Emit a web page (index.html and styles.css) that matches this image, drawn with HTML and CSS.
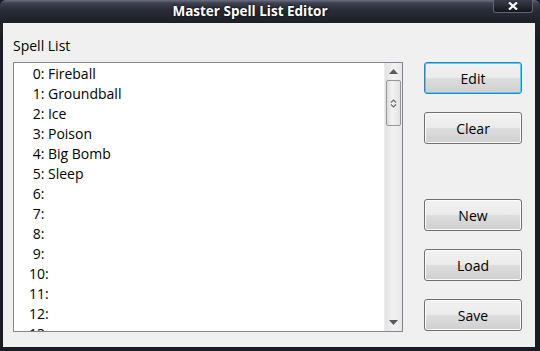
FILE: index.html
```html
<!DOCTYPE html>
<html lang="en">

<head>
  <meta charset="UTF-8" />
  <link rel="stylesheet" href="styles.css">
</head>

<body>
  <div class="window">
    <div class="titlebar">
      <span class="title">Master Spell List Editor</span>
      <div class="close">
        <svg width="10" height="8" viewBox="0 0 10 8"><path d="M1 0.5 L9 7.5 M9 0.5 L1 7.5" stroke="#ffffff" stroke-width="2.2"/></svg>
      </div>
    </div>
    <div class="client">
      <div class="list-side">
        <div class="label">Spell List</div>
        <div class="listbox">
          <div class="items">
            <div class="item"> 0: Fireball</div>
            <div class="item"> 1: Groundball</div>
            <div class="item"> 2: Ice</div>
            <div class="item"> 3: Poison</div>
            <div class="item"> 4: Big Bomb</div>
            <div class="item"> 5: Sleep</div>
            <div class="item"> 6:</div>
            <div class="item"> 7:</div>
            <div class="item"> 8:</div>
            <div class="item"> 9:</div>
            <div class="item">10:</div>
            <div class="item">11:</div>
            <div class="item">12:</div>
            <div class="item">13:</div>
          </div>
          <div class="scrollbar">
            <div class="arrow">
              <svg width="9" height="5" viewBox="0 0 9 5"><path d="M4.5 0 L9 5 L0 5 Z" fill="#5a5a5a"/></svg>
            </div>
            <div class="thumb">
              <svg width="7" height="9" viewBox="0 0 7 9"><path d="M1 3.5 L3.5 1 L6 3.5 M1 5.5 L3.5 8 L6 5.5" fill="none" stroke="#6a6a6a" stroke-width="1.2"/></svg>
            </div>
            <div class="track"></div>
            <div class="arrow">
              <svg width="9" height="5" viewBox="0 0 9 5"><path d="M0 0 L9 0 L4.5 5 Z" fill="#5a5a5a"/></svg>
            </div>
          </div>
        </div>
      </div>
      <div class="buttons">
        <button class="btn focus">Edit</button>
        <button class="btn">Clear</button>
        <div class="spacer"></div>
        <button class="btn">New</button>
        <button class="btn">Load</button>
        <button class="btn">Save</button>
      </div>
    </div>
  </div>
</body>

</html>
```

FILE: styles.css
```css
html,
body {
  margin: 0;
  height: 100%;
}

body {
  background-color: #1b1c23;
  font-family: "Open Sans", "Liberation Sans", sans-serif;
}

.window {
  display: flex;
  flex-direction: column;
  height: 351px;
  width: 540px;
  background: linear-gradient(#2a2c36, #1b1c23 40px);
  border-radius: 6px 6px 0 0;
  box-sizing: border-box;
}

.titlebar {
  height: 23px;
  position: relative;
  display: flex;
  justify-content: center;
  align-items: center;
  padding-right: 40px;
  background: linear-gradient(#6b7081 0, #3e4150 3px, #2a2c37 10px, #1e2029 22px);
  border-radius: 6px 6px 0 0;
}

.title {
  color: #ffffff;
  font-weight: bold;
  font-size: 13.5px;
  margin-top: -1px;
  text-shadow: 0 0 3px #000;
}

.close {
  position: absolute;
  top: 0;
  right: 7px;
  width: 38px;
  height: 12px;
  background: linear-gradient(#3a3d4a, #15161c);
  border: 1px solid #5f6372;
  border-top: none;
  border-radius: 0 0 3px 3px;
  display: flex;
  align-items: center;
  justify-content: center;
}

.client {
  flex: 1;
  margin: 0 5px 4px 3px;
  background-color: #f0f0f0;
  display: flex;
  padding: 14px 0 0 10px;
}

.label {
  color: #000000;
  font-size: 14px;
  line-height: 18px;
  height: 25px;
}

.listbox {
  width: 388px;
  height: 268px;
  border: 1px solid #828790;
  background-color: #ffffff;
  display: flex;
  overflow: hidden;
}

.items {
  flex: 1;
  padding: 1px 0 0 15px;
  overflow: hidden;
}

.item {
  white-space: pre;
  font-size: 14px;
  line-height: 20px;
  height: 20px;
  color: #000000;
}

.scrollbar {
  width: 17px;
  display: flex;
  flex-direction: column;
  background: linear-gradient(90deg, #e3e3e3, #f2f2f2 50%, #e8e8e8);
  border-left: 1px solid #ececec;
}

.arrow {
  height: 17px;
  display: flex;
  align-items: center;
  justify-content: center;
}

.thumb {
  height: 44px;
  margin: 0 1px;
  border: 1px solid #979797;
  border-radius: 2px;
  background: linear-gradient(90deg, #dcdcdc, #f3f3f3 40%, #e2e2e2);
  display: flex;
  align-items: center;
  justify-content: center;
}

.track {
  flex: 1;
}

.buttons {
  display: flex;
  flex-direction: column;
  gap: 18px;
  margin-left: 21px;
  padding-top: 25px;
}

.spacer {
  height: 19px;
}

.btn {
  width: 98px;
  height: 32px;
  border: 1px solid #707070;
  border-radius: 3px;
  background: linear-gradient(#f2f2f2, #ebebeb 48%, #dddddd 52%, #cfcfcf);
  font-family: "Open Sans", "Liberation Sans", sans-serif;
  font-size: 14px;
  color: #000000;
  padding: 0;
  box-shadow: inset 0 0 0 1px #fcfcfc;
}

.btn.focus {
  border-color: #3c7fb1;
  box-shadow: inset 0 0 0 1px #48d2f8;
}
```
